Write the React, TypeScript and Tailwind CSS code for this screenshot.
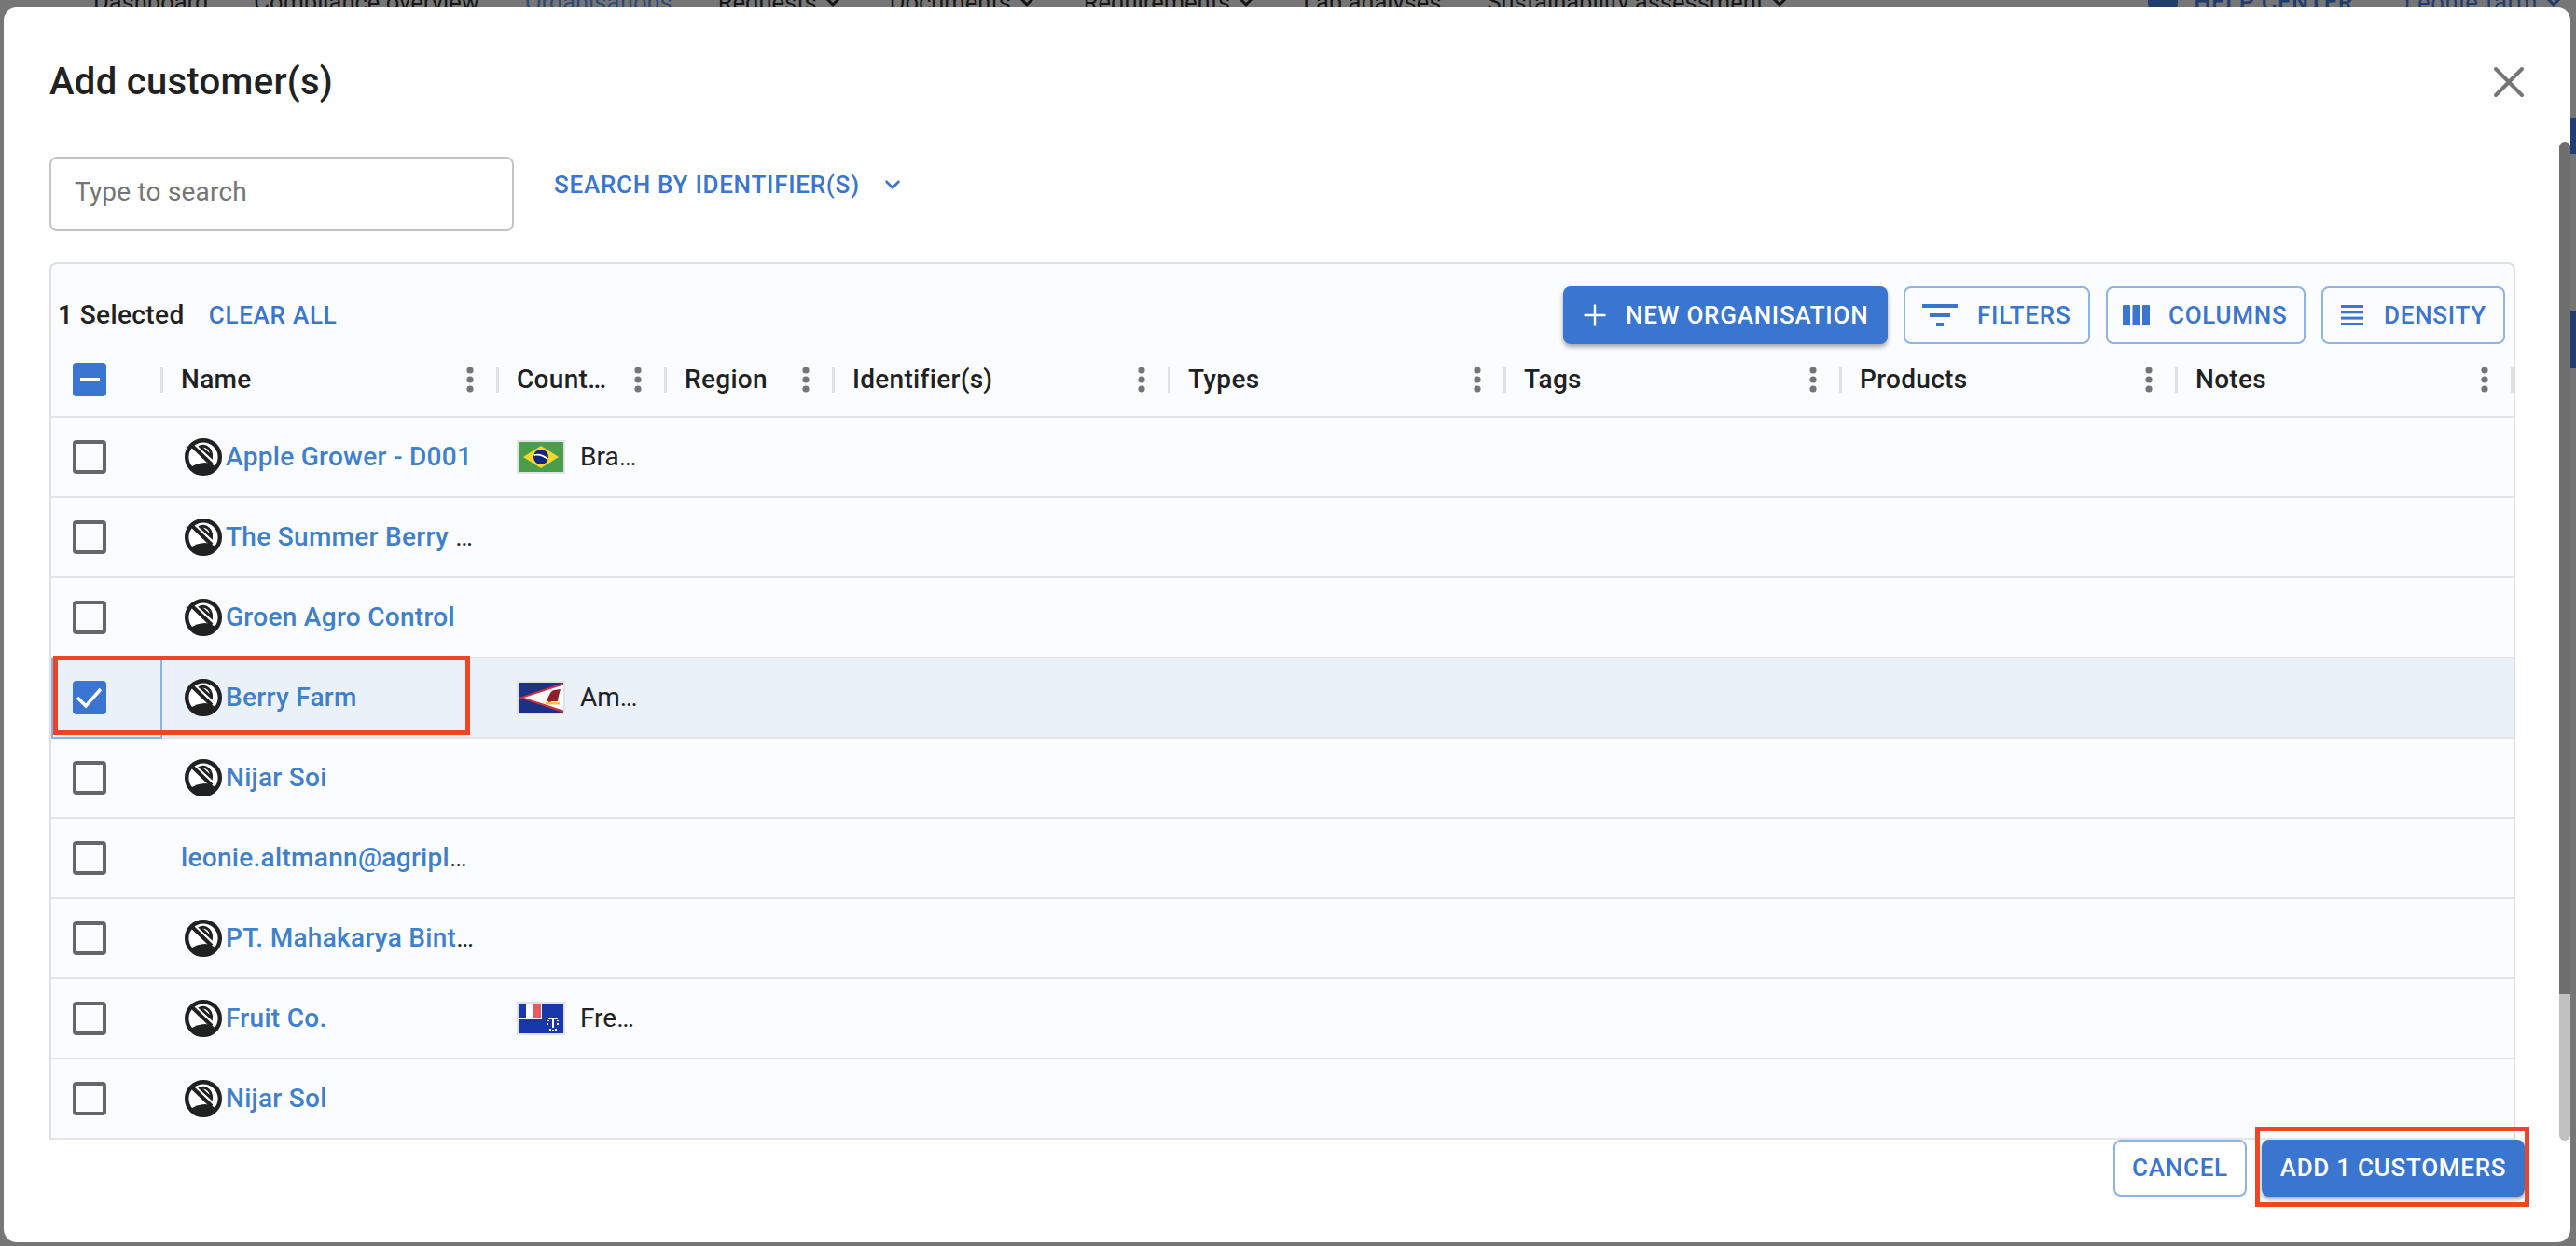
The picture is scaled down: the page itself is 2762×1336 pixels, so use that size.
import React from 'react';
import { ChevronDown, Plus, X } from 'lucide-react';

const columns = [
  { label: 'Name', width: 'w-[360px]' },
  { label: 'Country', width: 'w-[180px]' },
  { label: 'Region', width: 'w-[180px]' },
  { label: 'Identifier(s)', width: 'w-[360px]' },
  { label: 'Types', width: 'w-[360px]' },
  { label: 'Tags', width: 'w-[360px]' },
  { label: 'Products', width: 'w-[360px]' },
  { label: 'Notes', width: 'w-[360px]' },
];

type FlagName = 'brazil' | 'samoa' | 'french';

const rows: { name: string; logo?: boolean; flag?: FlagName; country?: string; selected?: boolean }[] = [
  { name: 'Apple Grower - D001', logo: true, flag: 'brazil', country: 'Brazil' },
  { name: 'The Summer Berry Company', logo: true },
  { name: 'Groen Agro Control', logo: true },
  { name: 'Berry Farm', logo: true, flag: 'samoa', country: 'American Samoa', selected: true },
  { name: 'Nijar Soi', logo: true },
  { name: 'leonie.altmann@agriplace.com' },
  { name: 'PT. Mahakarya Bintang Sejahtera', logo: true },
  { name: 'Fruit Co.', logo: true, flag: 'french', country: 'French Southern Territories' },
  { name: 'Nijar Sol', logo: true },
];

const OrgLogo = () => (
  <svg viewBox="0 0 40 40" className="h-[40px] w-[40px] shrink-0">
    <circle cx="20" cy="20" r="17.800" fill="#fff" stroke="#212121" strokeWidth="4.400" />
    <path d="M5 32C10 28 16 26 22 26C27 26 31 28 35 32C31 37 26 38 20 38C14 38 9 37 5 32Z" fill="#212121" />
    <path d="M7 7L29 28" stroke="#212121" strokeWidth="4" />
    <path d="M17 9C23 6.500 29 12 28.500 19.500Z" fill="#fff" stroke="#212121" strokeWidth="3" />
  </svg>
);

const Flag = ({ name }: { name: FlagName }) => (
  <div className="h-[36px] w-[52px] shrink-0 border-2 border-[#e0e2e6]">
    {name === 'brazil' && (
      <svg viewBox="0 0 48 32" className="block h-full w-full">
        <rect width="48" height="32" fill="#4a9e4b" />
        <path d="M24 4L43 16L24 28L5 16Z" fill="#f4d72e" />
        <circle cx="24" cy="16" r="8" fill="#14257c" />
        <path d="M16.5 14C21 13 27 14.500 31.500 18.500" stroke="#fff" strokeWidth="1.600" fill="none" />
      </svg>
    )}
    {name === 'samoa' && (
      <svg viewBox="0 0 48 32" className="block h-full w-full">
        <rect width="48" height="32" fill="#1d3185" />
        <path d="M0 16L48 0V32Z" fill="#c8313e" />
        <path d="M6 16L48 2.500V29.500Z" fill="#fff" />
        <path d="M30 19C33 14 34 9 38 8L45 7L43 14L42 20H36L33 21Z" fill="#8e1f2c" />
        <rect x="29" y="21" width="15" height="2.500" fill="#e8c25a" />
      </svg>
    )}
    {name === 'french' && (
      <svg viewBox="0 0 48 32" className="block h-full w-full">
        <rect width="48" height="32" fill="#1a36ab" />
        <rect width="25" height="17" fill="#fff" />
        <rect width="8" height="16" fill="#1a36ab" />
        <rect x="16" width="8" height="16" fill="#e85a5f" />
        <path d="M32 15H42V17H38V26H36V17H32Z" fill="#fff" />
        <path d="M30 21h2v2h-2zM41 21h2v2h-2zM33 27h2v2h-2zM39 27h2v2h-2zM36 28h2v2h-2zM31 18h2v1h-2zM41 18h2v1h-2z" fill="#fff" />
      </svg>
    )}
  </div>
);

const Kebab = () => (
  <svg viewBox="0 0 8 28" className="h-[28px] w-[8px] shrink-0">
    <circle cx="4" cy="4" r="3.600" fill="#757575" />
    <circle cx="4" cy="14" r="3.600" fill="#757575" />
    <circle cx="4" cy="24" r="3.600" fill="#757575" />
  </svg>
);

const Separator = () => <div className="h-[28px] w-[3px] shrink-0 bg-[#e0e0e0]" />;

const Check = ({ state }: { state: 'off' | 'on' | 'some' }) => {
  if (state === 'off') {
    return <div className="h-[36px] w-[36px] shrink-0 rounded-[4px] border-4 border-[#666666]" />;
  }
  return (
    <div className="flex h-[36px] w-[36px] shrink-0 items-center justify-center rounded-[4px] bg-[#3a75cf]">
      {state === 'some' ? (
        <div className="h-[4px] w-[21px] bg-white" />
      ) : (
        <svg viewBox="0 0 36 36" className="h-[36px] w-[36px]">
          <path d="M5 18L14 27L30 9" stroke="#fff" strokeWidth="3.600" fill="none" />
        </svg>
      )}
    </div>
  );
};

const navItems = [
  { label: 'Dashboard' },
  { label: 'Compliance overview' },
  { label: 'Organisations', active: true },
  { label: 'Requests', arrow: true },
  { label: 'Documents', arrow: true },
  { label: 'Requirements', arrow: true },
  { label: 'Lab analyses' },
  { label: 'Sustainability assessment', arrow: true },
];

const App = () => {
  return (
    <div className="relative h-[1336px] w-[2762px] overflow-hidden bg-[#767676] font-[family-name:Roboto,sans-serif]">
      {/* page behind the dialog, only its lower edge of the nav shows */}
      <div className="-mt-[14px] flex h-[32px] items-center pl-[100px] text-[25.5px] leading-[32px] text-[#161616]">
        <div className="flex items-center gap-[49px]">
          {navItems.map((item) => (
            <div key={item.label} className={`flex items-center gap-[5px] ${item.active ? 'text-[#2b4a75]' : ''}`}>
              {item.label}
              {item.arrow && <ChevronDown size={24} strokeWidth={3} />}
            </div>
          ))}
        </div>
        <div className="ml-auto flex items-center pr-[12px] tracking-[0.7px] text-[#1f3d6d]">
          <div className="h-[32px] w-[32px] rounded-full bg-[#1f3d6d]" />
          <span className="ml-[17px] font-medium">HELP CENTER</span>
          <span className="ml-[54px]">Leonie farm</span>
          <ChevronDown size={24} strokeWidth={3} className="ml-[5px]" />
        </div>
      </div>

      <div className="absolute right-0 top-[127px] h-[38px] w-[6px] bg-[#1f3d6d]" />
      <div className="absolute right-0 top-[333px] h-[62px] w-[6px] bg-[#1f3d6d]" />

      {/* dialog */}
      <div className="absolute left-[4px] top-[8px] flex h-[1324px] w-[2752px] flex-col rounded-[14px] bg-white pl-[49px] pt-[56px]">
        <div className="flex h-[48px] items-center justify-between pr-[38px]">
          <h2 className="text-[40px] font-medium leading-[48px] tracking-[0.3px] text-[#212121]">Add customer(s)</h2>
          <X size={56} strokeWidth={1.700} className="text-[#757575]" />
        </div>

        <div className="mt-[56px] flex items-start">
          <input
            placeholder="Type to search"
            className="h-[80px] w-[498px] rounded-[8px] border-2 border-[#c4c4c4] bg-white pb-[6px] pl-[25px] text-[28px] tracking-[0.2px] outline-none placeholder:text-[#757575]"
          />
          <button className="ml-[43px] mt-[14px] flex items-center text-[26px] font-medium leading-[32px] tracking-[0.74px] text-[#3a75cf]">
            SEARCH BY IDENTIFIER(S)
            <ChevronDown size={26} strokeWidth={2.400} className="ml-[22px]" />
          </button>
        </div>

        {/* table */}
        <div className="mt-[33px] w-[2644px] rounded-t-[8px] border-x-2 border-t-2 border-[#e0e0e0] bg-[#fbfcfe]">
          <div className="flex items-center justify-between pl-[7px] pr-[9px] pt-[24px]">
            <div className="flex items-center font-medium leading-[32px]">
              <span className="text-[28px] tracking-[0.4px] text-[#212121]">1 Selected</span>
              <span className="ml-[26px] text-[26px] tracking-[0.74px] text-[#3a75cf]">CLEAR ALL</span>
            </div>
            <div className="flex items-center gap-[17px] text-[26px] font-medium tracking-[0.74px] text-[#3a75cf]">
              <button className="flex h-[62px] w-[348px] items-center rounded-[8px] bg-[#3a75cf] pl-[16px] text-white shadow-[0_3px_5px_rgba(0,0,0,0.35)]">
                <Plus size={36} strokeWidth={1.600} />
                <span className="ml-[15px]">NEW ORGANISATION</span>
              </button>
              <button className="flex h-[62px] w-[200px] items-center rounded-[8px] border-2 border-[#90b3e5] pl-[18px]">
                <svg viewBox="0 0 38 24" className="h-[24px] w-[38px]">
                  <rect width="38" height="4" fill="#3a75cf" />
                  <rect x="8" y="10" width="22" height="4" fill="#3a75cf" />
                  <rect x="15" y="20" width="8" height="4" fill="#3a75cf" />
                </svg>
                <span className="ml-[21px]">FILTERS</span>
              </button>
              <button className="flex h-[62px] w-[214px] items-center rounded-[8px] border-2 border-[#90b3e5] pl-[16px]">
                <svg viewBox="0 0 29 22" className="h-[22px] w-[29px]">
                  <rect width="8" height="22" rx="1" fill="#3a75cf" />
                  <rect x="10.500" width="8" height="22" rx="1" fill="#3a75cf" />
                  <rect x="21" width="8" height="22" rx="1" fill="#3a75cf" />
                </svg>
                <span className="ml-[20px]">COLUMNS</span>
              </button>
              <button className="flex h-[62px] w-[197px] items-center rounded-[8px] border-2 border-[#90b3e5] pl-[19px]">
                <svg viewBox="0 0 24 22" className="h-[22px] w-[24px]">
                  <rect width="24" height="3" fill="#3a75cf" />
                  <rect y="6.300" width="24" height="3" fill="#3a75cf" />
                  <rect y="12.600" width="24" height="3" fill="#3a75cf" />
                  <rect y="19" width="24" height="3" fill="#3a75cf" />
                </svg>
                <span className="ml-[22px]">DENSITY</span>
              </button>
            </div>
          </div>

          <div className="flex h-[79px] items-center border-b-2 border-[#e2e4e8] pb-[2px] text-[28px] font-medium tracking-[0.3px] text-[#212121]">
            <div className="flex w-[120px] items-center justify-between pl-[23px]">
              <Check state="some" />
              <Separator />
            </div>
            {columns.map((col) => (
              <div key={col.label} className={`flex items-center pl-[19px] ${col.width}`}>
                <span className="min-w-0 flex-1 truncate">{col.label}</span>
                <span className="ml-[28px]">
                  <Kebab />
                </span>
                <span className="ml-[24px]">
                  <Separator />
                </span>
              </div>
            ))}
          </div>

          {rows.map((row) => (
            <div
              key={row.name}
              className={`relative flex h-[86px] items-center border-b-2 border-[#e2e4e8] text-[28px] ${row.selected ? 'bg-[#ebf1f9]' : ''}`}
            >
              <div className="w-[120px] pl-[23px]">
                <Check state={row.selected ? 'on' : 'off'} />
              </div>
              <div className="flex w-[360px] items-center pl-[19px] pr-[22px]">
                {row.logo && (
                  <span className="ml-[4px]">
                    <OrgLogo />
                  </span>
                )}
                <span className={`min-w-0 flex-1 truncate text-[#212121] ${row.logo ? 'ml-[4px]' : ''}`}>
                  <span className="font-medium tracking-[0.3px] text-[#3f80cb]">{row.name}</span>
                </span>
              </div>
              {row.flag && (
                <div className="flex w-[180px] items-center pl-[19px]">
                  <Flag name={row.flag} />
                  <span className="ml-[16px] w-[64px] truncate text-[#212121]">{row.country}</span>
                </div>
              )}
              {row.selected && (
                <div className="absolute -bottom-[2px] left-0 top-0 w-[119px] border-2 border-[#8db0e6]" />
              )}
            </div>
          ))}
        </div>

        <div className="flex justify-end gap-[16px] pr-[49px] text-[26px] font-medium tracking-[0.74px]">
          <button className="h-[61px] w-[143px] rounded-[8px] border-2 border-[#90b3e5] text-[#3a75cf]">CANCEL</button>
          <button className="h-[61px] w-[282px] rounded-[8px] bg-[#3a75cf] text-white shadow-[0_3px_5px_rgba(0,0,0,0.35)]">
            ADD 1 CUSTOMERS
          </button>
        </div>

        {/* scrollbar */}
        <div className="absolute right-0 top-[144px] h-[914px] w-[12px] rounded-t-full bg-[#6e6e6e]" />
        <div className="absolute right-0 top-[1058px] h-[157px] w-[12px] rounded-b-full bg-[#c1c1c1]" />
      </div>

      {/* red annotation boxes */}
      <div className="absolute left-[57px] top-[703px] h-[85px] w-[447px] border-[5px] border-[#ee4527]" />
      <div className="absolute left-[2418px] top-[1208px] h-[86px] w-[294px] border-[5px] border-[#ee4527]" />
    </div>
  );
};

export default App;
